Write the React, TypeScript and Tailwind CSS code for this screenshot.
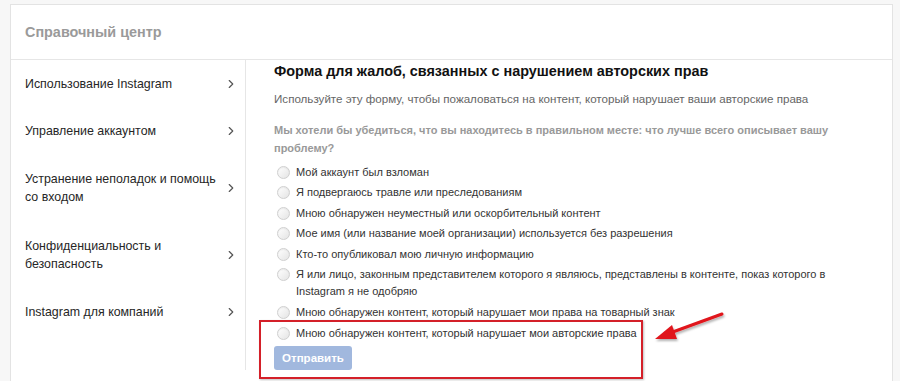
import { ChevronRight } from 'lucide-react';

const sections = [
  ['Использование Instagram'],
  ['Управление аккаунтом'],
  ['Устранение неполадок и помощь', 'со входом'],
  ['Конфиденциальность и', 'безопасность'],
  ['Instagram для компаний'],
];

const options = [
  'Мой аккаунт был взломан',
  'Я подвергаюсь травле или преследованиям',
  'Мною обнаружен неуместный или оскорбительный контент',
  'Мое имя (или название моей организации) используется без разрешения',
  'Кто-то опубликовал мою личную информацию',
  'Я или лицо, законным представителем которого я являюсь, представлены в контенте, показ которого в Instagram я не одобряю',
  'Мною обнаружен контент, который нарушает мои права на товарный знак',
  'Мною обнаружен контент, который нарушает мои авторские права',
];

function Radio() {
  return (
    <span className="mt-[2px] h-[13px] w-[13px] shrink-0 rounded-full border border-[#cfcfcf] bg-gradient-to-br from-white to-[#e4e4e4] shadow-[inset_0_1px_1px_rgba(0,0,0,0.06)]" />
  );
}

export default function App() {
  return (
    <div className="relative h-[381px] w-[900px] overflow-hidden bg-[#f7f7f7] pl-[10px] pr-[7px] pt-[4px] font-['Liberation_Sans',Arial,sans-serif]">
      <div className="h-[400px] border border-[#e3e3e3] bg-white">
        <div className="flex h-[55px] items-center border-b border-[#e6e6e6] pl-[14px] pt-[2px] text-[14.4px] font-bold text-[#9a9a9a]">
          Справочный центр
        </div>
        <div className="flex">
          <div className="w-[235px] shrink-0 border-r border-[#e6e6e6]">
            {sections.map((lines, i) => (
              <div
                key={i}
                className={`flex items-center justify-between pl-[14px] pr-[7px] text-[12.4px] leading-[18px] text-[#262626] ${
                  lines.length > 1 ? 'py-[15.5px]' : 'py-[14.5px]'
                }`}
              >
                <div className="min-w-0 whitespace-nowrap">
                  {lines.map((l, j) => (
                    <div key={j}>{l}</div>
                  ))}
                </div>
                <ChevronRight size={14} strokeWidth={2} className="shrink-0 text-[#555]" />
              </div>
            ))}
          </div>
          <div className="flex-1 pl-[28px] pr-[54px] pt-[1px]">
            <h1 className="text-[14.4px] font-bold leading-[20px] text-[#111]">
              Форма для жалоб, связанных с нарушением авторских прав
            </h1>
            <p className="mt-[9px] text-[11.6px] leading-[18px] text-[#666]">
              Используйте эту форму, чтобы пожаловаться на контент, который нарушает ваши авторские права
            </p>
            <p className="mt-[13px] text-[11px] font-bold leading-[18px] text-[#999]">
              Мы хотели бы убедиться, что вы находитесь в правильном месте: что лучше всего описывает вашу проблему?
            </p>
            <div className="mt-[6.5px] flex flex-col gap-[3.6px]">
              {options.map((o, i) => (
                <label key={i} className="flex gap-[6px] pl-[3px] text-[11px] leading-[17px] text-[#333]">
                  <Radio />
                  <span>{o}</span>
                </label>
              ))}
            </div>
            <button className="mt-[4.5px] h-[24px] w-[78px] rounded-[3px] bg-[#a1b8de] text-[11.5px] font-bold text-white">
              Отправить
            </button>
          </div>
        </div>
      </div>

      <div className="pointer-events-none absolute left-[259px] top-[320px] h-[59px] w-[384px] border-[2.5px] border-[#d42029] shadow-[1px_1px_2px_rgba(0,0,0,0.25)]" />
      <svg className="pointer-events-none absolute left-[648px] top-[306px]" width="84" height="42" viewBox="0 0 84 42">
        <defs>
          <filter id="sh" x="-20%" y="-20%" width="140%" height="160%">
            <feDropShadow dx="1" dy="2" stdDeviation="1.2" floodColor="#000" floodOpacity="0.3" />
          </filter>
        </defs>
        <g filter="url(#sh)">
          <line x1="74" y1="8" x2="22" y2="27" stroke="#e0141c" strokeWidth="3" strokeLinecap="round" />
          <polygon points="7,33 24,19 29,33" fill="#e0141c" />
        </g>
      </svg>
    </div>
  );
}
